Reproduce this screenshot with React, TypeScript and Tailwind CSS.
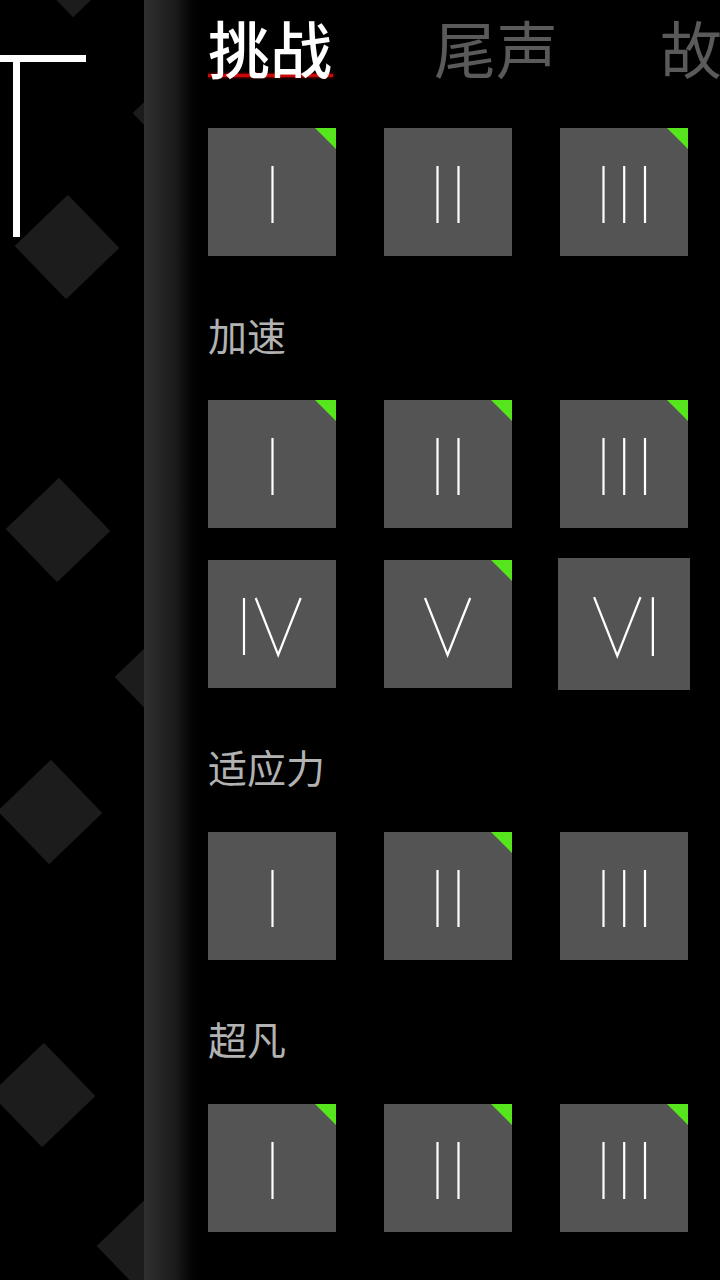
import React from "react";

type Numeral = "I" | "II" | "III" | "IV" | "V" | "VI";

const FONT = { fontFamily: '"Noto Sans CJK SC", "Noto Sans", sans-serif' };

function Glyph({ n }: { n: Numeral }) {
  const y1 = 38;
  const y2 = 95;
  const lines: number[] = [];
  let v: [number, number, number] | null = null;
  if (n === "I") lines.push(64.5);
  if (n === "II") lines.push(53.5, 74.5);
  if (n === "III") lines.push(43.5, 64.2, 85);
  if (n === "IV") {
    lines.push(36);
    v = [47.7, 70.2, 92.7];
  }
  if (n === "V") v = [41, 63.6, 86.2];
  if (n === "VI") {
    v = [35, 57.5, 80];
    lines.push(92);
  }
  return (
    <svg viewBox="0 0 128 128" className="absolute inset-0 h-full w-full">
      {lines.map((x, i) => (
        <line key={i} x1={x} y1={y1} x2={x} y2={y2} stroke="#ffffff" strokeWidth={2.2} />
      ))}
      {v && (
        <polyline
          points={`${v[0]},${y1} ${v[1]},${y2} ${v[2]},${y1}`}
          fill="none"
          stroke="#ffffff"
          strokeWidth={2.2}
          strokeLinejoin="miter"
        />
      )}
    </svg>
  );
}

function Tile({ n, done, active }: { n: Numeral; done?: boolean; active?: boolean }) {
  return (
    <div
      className={
        "relative h-[128px] w-[128px] bg-[#545454] " + (active ? "scale-[1.031]" : "")
      }
    >
      <Glyph n={n} />
      {done && (
        <svg viewBox="0 0 21 21" className="absolute right-0 top-0 h-[21px] w-[21px]">
          <polygon points="0,0 21,0 21,21" fill="#57e61e" />
        </svg>
      )}
    </div>
  );
}

function Label({ text }: { text: string }) {
  return (
    <div className="h-[144px] pt-[59px]">
      <div className="text-[39px] leading-[39px] text-[#b2b2b2]" style={FONT}>
        {text}
      </div>
    </div>
  );
}

function Grid({ children }: { children: React.ReactNode }) {
  return (
    <div className="grid grid-cols-[128px_128px_128px] gap-x-[48px] gap-y-[32px]">
      {children}
    </div>
  );
}

const diamonds: [number, number][] = [
  [74, -35],
  [185, 114],
  [67, 247],
  [58, 530],
  [167, 678],
  [50, 812],
  [43, 1095],
  [149, 1247],
];

export default function App() {
  return (
    <div className="flex h-[1280px] w-[720px] overflow-hidden bg-black">
      <aside className="relative h-full w-[144px] shrink-0 overflow-hidden bg-black">
        {diamonds.map(([x, y], i) => (
          <div
            key={i}
            className="absolute h-[74px] w-[74px] rotate-[46deg] bg-[#1c1c1c]"
            style={{ left: x - 37, top: y - 37 }}
          />
        ))}
        <div className="absolute left-0 top-[55px] h-[7px] w-[86px] bg-white" />
        <div className="absolute left-[13px] top-[55px] h-[182px] w-[7px] bg-white" />
      </aside>
      <div className="h-full w-[64px] shrink-0 bg-linear-to-r from-[#303030] via-[#1a1a1a] to-black" />
      <main className="flex-1 overflow-hidden">
        <div className="flex h-[94px] items-center gap-[102px] whitespace-nowrap" style={FONT}>
          <div className="relative">
            <span className="relative z-10 text-[62px] font-medium leading-[62px] text-white">
              挑战
            </span>
            <div className="absolute left-0 right-[-1px] top-[58px] h-[3px] bg-[#c80a0a] shadow-[0_0_3px_#ff0000]" />
          </div>
          <span className="text-[62px] leading-[62px] text-[#5a5a5a]">尾声</span>
          <span className="text-[62px] leading-[62px] text-[#5a5a5a]">故事</span>
        </div>
        <div className="pt-[34px]">
          <Grid>
            <Tile n="I" done />
            <Tile n="II" />
            <Tile n="III" done />
          </Grid>
          <Label text="加速" />
          <Grid>
            <Tile n="I" done />
            <Tile n="II" done />
            <Tile n="III" done />
            <Tile n="IV" />
            <Tile n="V" done />
            <Tile n="VI" active />
          </Grid>
          <Label text="适应力" />
          <Grid>
            <Tile n="I" />
            <Tile n="II" done />
            <Tile n="III" />
          </Grid>
          <Label text="超凡" />
          <Grid>
            <Tile n="I" done />
            <Tile n="II" done />
            <Tile n="III" done />
          </Grid>
        </div>
      </main>
    </div>
  );
}
